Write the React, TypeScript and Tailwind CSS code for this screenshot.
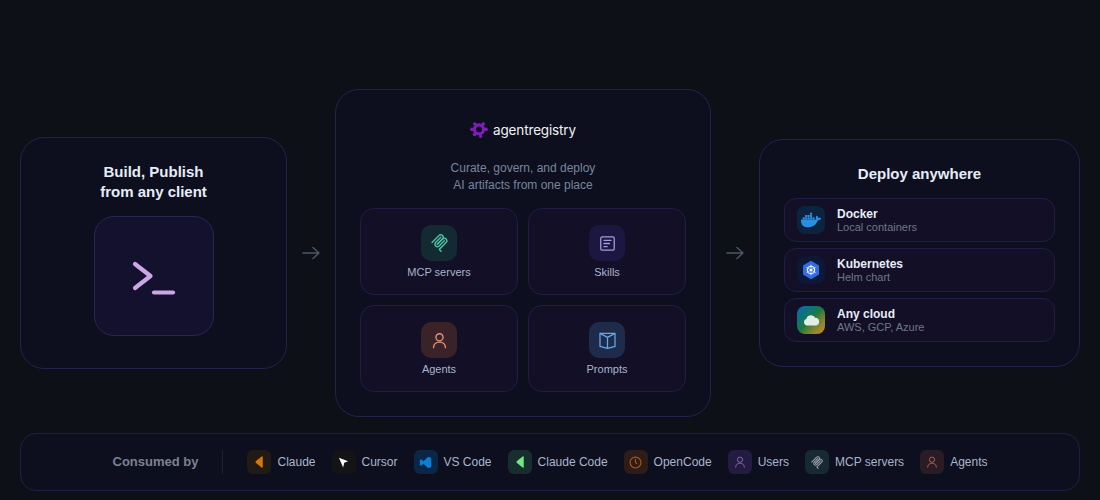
import React from 'react';
import { SiDocker } from 'react-icons/si';

const font = { fontFamily: '"Liberation Sans", Arial, sans-serif' };

const McpIcon = ({ className }: { className?: string }) => (
  <svg viewBox="15 15 165 175" fill="none" stroke="currentColor" strokeWidth="14" strokeLinecap="round" className={className}>
    <path d="M25 97.85 92.88 29.97c9.37-9.37 24.57-9.37 33.94 0 9.37 9.37 9.37 24.57 0 33.94L75.56 115.18" />
    <path d="M76.27 114.47 126.82 63.91c9.37-9.37 24.57-9.37 33.94 0l.35.35c9.37 9.37 9.37 24.57 0 33.94L99.72 159.6c-3.12 3.12-3.12 8.19 0 11.31l12.61 12.61" />
    <path d="M109.85 46.94 59.65 97.15c-9.37 9.37-9.37 24.57 0 33.94 9.37 9.37 24.57 9.37 33.94 0l50.2-50.21" />
  </svg>
);

const UserIcon = ({ className }: { className?: string }) => (
  <svg viewBox="0 0 24 24" fill="none" stroke="currentColor" strokeWidth="1.7" strokeLinecap="round" className={className}>
    <circle cx="12" cy="8" r="4.5" />
    <path d="M4.5 21c0-4.2 3.2-7 7.5-7s7.5 2.8 7.5 7" />
  </svg>
);

const SkillsIcon = ({ className }: { className?: string }) => (
  <svg viewBox="0 0 24 24" fill="none" stroke="currentColor" strokeWidth="1.6" strokeLinecap="round" className={className}>
    <rect x="3.5" y="3.5" width="17" height="17" rx="2" />
    <path d="M7.5 8h9M7.5 12h7M7.5 16h4" />
  </svg>
);

const BookIcon = ({ className }: { className?: string }) => (
  <svg viewBox="0 0 24 24" fill="none" stroke="currentColor" strokeWidth="1.6" strokeLinejoin="round" className={className}>
    <path d="M2.5 3h19v16.5l-9.5 2.5-9.5-2.5z" />
    <path d="M2.5 3l9.5 5 9.5-5M12 8v14" />
  </svg>
);

const ArrowIcon = () => (
  <svg viewBox="0 0 18 14" fill="none" stroke="#4b5563" strokeWidth="1.5" strokeLinecap="round" strokeLinejoin="round" className="w-[18px] h-[14px]">
    <path d="M1 7h16M11 1.5 17 7l-6 5.5" />
  </svg>
);

const KubeIcon = () => (
  <svg viewBox="0 0 20 20" className="w-5 h-5">
    <path d="M10 .8 18 5.4v9.2l-8 4.6-8-4.6V5.4z" fill="#326ce5" />
    <circle cx="10" cy="10" r="3.8" fill="none" stroke="#fff" strokeWidth="1" />
    <circle cx="10" cy="10" r="1.1" fill="#fff" />
    <path d="M10 4.7v10.6M5.4 7.4l9.2 5.2M14.6 7.4l-9.2 5.2" stroke="#fff" strokeWidth=".7" />
  </svg>
);

const ClaudeMark = ({ className }: { className?: string }) => (
  <svg viewBox="0 0 12 16" className={className} fill="currentColor">
    <path d="M9.5 1 10.5 1.5V14.5L9.5 15 2 9V7z" />
  </svg>
);

const CursorMark = () => (
  <svg viewBox="0 0 12 12" className="w-[11px] h-[11px]" fill="#fff">
    <path d="M1 .8 11 4.6 6.8 6.4 5.6 11.4z" />
  </svg>
);

const VsCodeMark = () => (
  <svg viewBox="0 0 16 16" className="w-[13px] h-[13px]" fill="#0a7fd6">
    <path d="M11.2 1 15 2.6v10.8L11.2 15 5.6 9.6l-3 2.4L1 11V5l1.6-1 3 2.4z" />
  </svg>
);

const ClockMark = () => (
  <svg viewBox="0 0 24 24" fill="none" stroke="#b9580f" strokeWidth="2" strokeLinecap="round" className="w-[13px] h-[13px]">
    <circle cx="12" cy="12" r="10" />
    <path d="M12 6.5V12l2.5 2" />
  </svg>
);

const Logo = () => (
  <svg viewBox="0 0 18 16" fill="#7b1fb5" className="w-[18px] h-4">
    <circle cx="9" cy="7.4" r="4.5" fill="none" stroke="#7b1fb5" strokeWidth="3.2" />
    <circle cx="4.8" cy="2" r="1.8" />
    <circle cx="13.2" cy="2" r="1.8" />
    <circle cx="1.9" cy="7.4" r="1.8" />
    <circle cx="16.1" cy="7.4" r="1.8" />
    <circle cx="4.6" cy="12.4" r="1.8" />
    <circle cx="10.6" cy="14.4" r="1.6" />
  </svg>
);

const artifacts = [
  { label: 'MCP servers', bg: 'bg-[#132a33]', icon: <McpIcon className="w-[17px] h-[18px] text-[#4dbf9d]" /> },
  { label: 'Skills', bg: 'bg-[#1b1740]', icon: <SkillsIcon className="w-[19px] h-[19px] text-[#a99be0]" /> },
  { label: 'Agents', bg: 'bg-[#3a2229]', icon: <UserIcon className="w-[19px] h-[19px] text-[#e0957a]" /> },
  { label: 'Prompts', bg: 'bg-[#1f2b4a]', icon: <BookIcon className="w-[19px] h-[19px] text-[#63a8e6]" /> },
];

const targets = [
  { name: 'Docker', sub: 'Local containers', bg: 'bg-[#0c2340]', icon: <SiDocker className="w-5 h-5 text-[#2a8fe0]" /> },
  { name: 'Kubernetes', sub: 'Helm chart', bg: 'bg-[#0d1736]', icon: <KubeIcon /> },
  {
    name: 'Any cloud',
    sub: 'AWS, GCP, Azure',
    bg: 'bg-gradient-to-br from-[#1a62b8] via-[#1d7a3c] to-[#d08a10]',
    icon: (
      <svg viewBox="0 0 20 14" className="w-[17px] h-[12px]" fill="#e4ece4">
        <path d="M5 13.5a4 4 0 0 1-1-7.8A5.6 5.6 0 0 1 14.4 4.4a4.6 4.6 0 0 1 .9 9.1z" />
      </svg>
    ),
  },
];

const consumers = [
  { label: 'Claude', bg: 'bg-[#211a15]', icon: <ClaudeMark className="w-[10px] h-[14px] text-[#d97706]" /> },
  { label: 'Cursor', bg: 'bg-[#141416]', icon: <CursorMark /> },
  { label: 'VS Code', bg: 'bg-[#0c2647]', icon: <VsCodeMark /> },
  { label: 'Claude Code', bg: 'bg-[#182e2e]', icon: <ClaudeMark className="w-[10px] h-[14px] text-[#6ee787]" /> },
  { label: 'OpenCode', bg: 'bg-[#2e1c18]', icon: <ClockMark /> },
  { label: 'Users', bg: 'bg-[#231b42]', icon: <UserIcon className="w-[14px] h-[14px] text-[#8462aa]" /> },
  { label: 'MCP servers', bg: 'bg-[#172932]', icon: <McpIcon className="w-3 h-[13px] text-[#9aa5ad]" /> },
  { label: 'Agents', bg: 'bg-[#2a1c25]', icon: <UserIcon className="w-[14px] h-[14px] text-[#a85f4b]" /> },
];

export default function App() {
  return (
    <div style={font} className="w-[1100px] h-[500px] bg-[#0d1117] px-5 pb-[9px] flex flex-col justify-end gap-4 overflow-hidden">
      <div className="flex items-center">
        {/* build panel */}
        <div className="w-[267px] h-[232px] rounded-[24px] border border-[#25224a] bg-[#0d0f1e] flex flex-col items-center pt-[24px]">
          <h2 className="text-[15px] leading-[20px] font-bold text-[#e6edf7] text-center">
            Build, Publish
            <br />
            from any client
          </h2>
          <div className="mt-[14px] w-[120px] h-[120px] rounded-[20px] border border-[#2a2652] bg-[#14112e] flex items-center justify-center">
            <svg viewBox="0 0 44 38" fill="none" stroke="#cda6e6" strokeWidth="4.2" strokeLinecap="round" strokeLinejoin="round" className="w-[44px] h-[38px]">
              <path d="M3 7 18.5 19 3 31" />
              <path d="M22 35.5h19" />
            </svg>
          </div>
        </div>

        <div className="w-[48px] flex justify-center">
          <ArrowIcon />
        </div>

        {/* registry panel */}
        <div className="w-[376px] h-[328px] rounded-[24px] border border-[#25224a] bg-[#0d0f1e] px-[24px] pt-[30px] flex flex-col">
          <div className="flex items-center justify-center gap-[5px] h-[20px]">
            <Logo />
            <span className="text-[13.5px] font-normal tracking-[-0.15px] text-[#f1f1f5]" style={{ fontFamily: 'Inter, sans-serif' }}>
              agentregistry
            </span>
          </div>
          <p className="mt-[20px] text-[12px] leading-[17px] text-[#78859c] text-center">
            Curate, govern, and deploy
            <br />
            AI artifacts from one place
          </p>
          <div className="mt-[14px] grid grid-cols-2 gap-x-[10px] gap-y-[10px]">
            {artifacts.map((a) => (
              <div key={a.label} className="h-[87px] rounded-[14px] border border-[#211e45] bg-[#120f27] flex flex-col items-center pt-[16px]">
                <div className={`w-9 h-9 rounded-[10px] flex items-center justify-center ${a.bg}`}>{a.icon}</div>
                <span className="mt-[3px] text-[11px] leading-[16px] text-[#a8b5cc]">{a.label}</span>
              </div>
            ))}
          </div>
        </div>

        <div className="w-[48px] flex justify-center">
          <ArrowIcon />
        </div>

        {/* deploy panel */}
        <div className="w-[321px] h-[228px] rounded-[24px] border border-[#25224a] bg-[#0d0f1e] px-[24px] pt-[24px]">
          <h2 className="text-[15px] leading-[20px] font-bold text-[#e6edf7] text-center">Deploy anywhere</h2>
          <div className="mt-[14px] flex flex-col gap-[6px]">
            {targets.map((t) => (
              <div key={t.name} className="h-[44px] rounded-[12px] border border-[#211e45] bg-[#120f27] flex items-center pl-[12px] gap-[12px]">
                <div className={`w-7 h-7 rounded-lg flex items-center justify-center ${t.bg}`}>{t.icon}</div>
                <div>
                  <div className="text-[12px] leading-[14px] font-bold text-[#e6edf7]">{t.name}</div>
                  <div className="text-[11px] leading-[13px] text-[#6f7787]">{t.sub}</div>
                </div>
              </div>
            ))}
          </div>
        </div>
      </div>

      {/* consumed by */}
      <div className="h-[58px] rounded-[16px] border border-[#211e45] bg-[#0d0f1e] flex items-center justify-center">
        <span className="text-[13px] font-bold text-[#7b8290]">Consumed by</span>
        <div className="w-px h-6 bg-[#201e3f] mx-[24px]" />
        <div className="flex items-center gap-[16px]">
          {consumers.map((c) => (
            <div key={c.label} className="flex items-center gap-[6px]">
              <div className={`w-6 h-6 rounded-md flex items-center justify-center ${c.bg}`}>{c.icon}</div>
              <span className="text-[12px] text-[#a8b5cc]">{c.label}</span>
            </div>
          ))}
        </div>
      </div>
    </div>
  );
}
